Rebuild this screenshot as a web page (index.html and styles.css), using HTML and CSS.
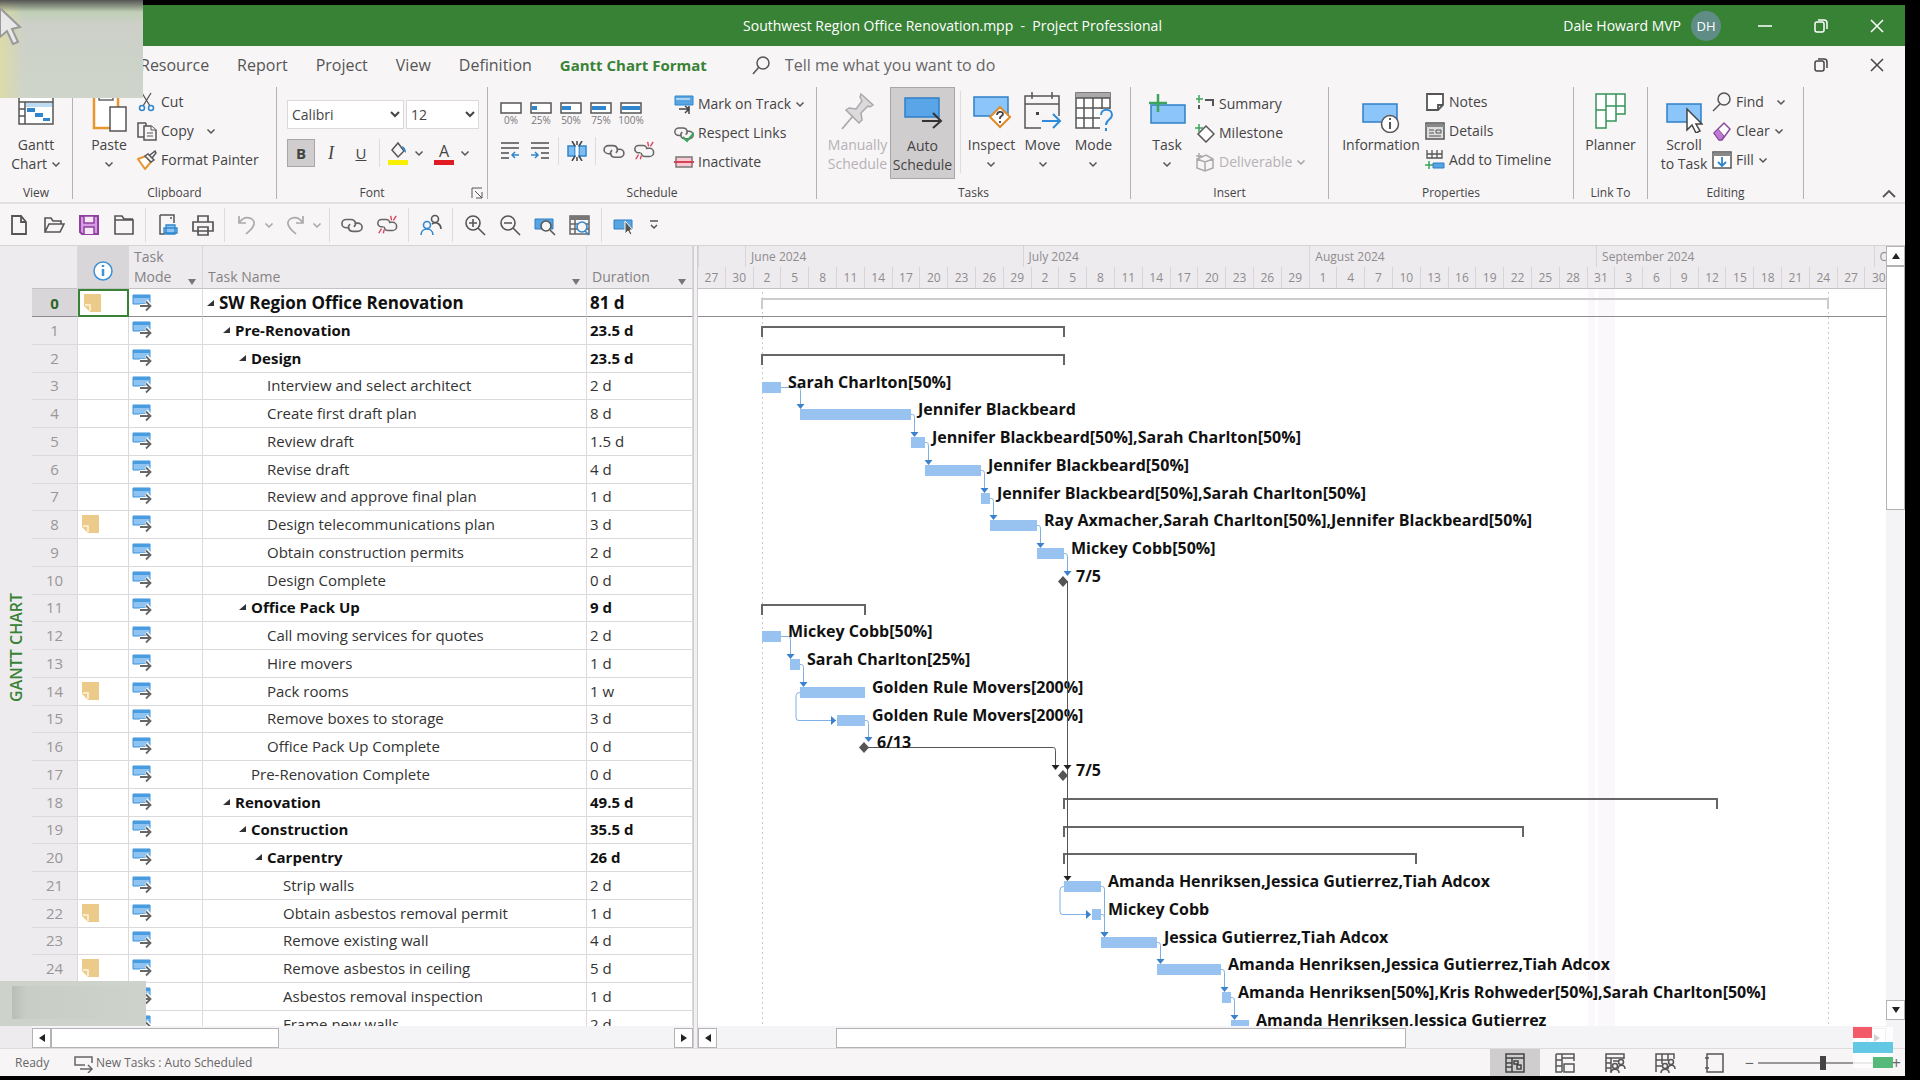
FILE: index.html
```html
<!DOCTYPE html>
<html lang="en">

<head>
    <meta charset="UTF-8">
    <link rel="stylesheet" href="styles.css">
    <title>Southwest Region Office Renovation.mpp - Project Professional</title>
</head>

<body>
    <!-- shared icons -->
    <svg class="symbols" aria-hidden="true">
        <symbol id="caret" viewBox="0 0 10 10"><path d="M1.5 3.5 5 7l3.500-3.500" fill="none" stroke="#555" stroke-width="1.500"/></symbol>
        <symbol id="restore" viewBox="0 0 16 16"><rect x="2" y="4" width="9" height="10" rx="2" fill="none" stroke="currentColor" stroke-width="1.500"/><path d="M5 2h6a3 3 0 0 1 3 3v6" fill="none" stroke="currentColor" stroke-width="1.500"/></symbol>
        <symbol id="close" viewBox="0 0 16 16"><path d="M2 2l12 12M14 2 2 14" stroke="currentColor" stroke-width="1.500"/></symbol>
        <symbol id="link" viewBox="0 0 24 20"><g fill="none" stroke="#666" stroke-width="1.800"><path d="M9 13H6a5 4.500 0 0 1 0-9h5a5 4.500 0 0 1 3 8"/><path d="M15 8h3a5 4.500 0 0 1 0 9h-5a5 4.500 0 0 1-3-8"/></g></symbol>
        <symbol id="unlink" viewBox="0 0 24 20"><g fill="none" stroke="#666" stroke-width="1.700"><path d="M8 12H6a4 4 0 0 1 0-8h5a4 4 0 0 1 4 4M14 7h4a4.500 4.500 0 0 1 0 9h-5a4 4 0 0 1-4-4"/></g><path d="M17 5l-1-5M19 5l3-5M3 19l3-5M8 19l1-4" stroke="#e0405a" stroke-width="1.500"/></symbol>
        <symbol id="mode" viewBox="0 0 20 18"><path d="M1 1h17v9H1z" fill="#8ec3f2" stroke="#3e92d8"/><path d="M1 1h17v3H1z" fill="#4a9ce0"/><path d="M8 12h11M14 7l5 5-5 5" fill="none" stroke="#fff" stroke-width="4"/><path d="M8 12h10M14 7.500l4.500 4.500-4.500 4.500" fill="none" stroke="#666" stroke-width="1.800"/></symbol>
        <symbol id="note" viewBox="0 0 20 20"><path d="M1 1h17v18H7l-6-6z" fill="#eccb8a"/><path d="M2 12h5v6" fill="none" stroke="#fff6e0" stroke-width="1.500"/></symbol>
    </svg>

    <div class="window">
        <header class="titlebar">
            <h1>Southwest Region Office Renovation.mpp&nbsp; -&nbsp; Project Professional</h1>
            <div class="account">
                <span>Dale Howard MVP</span>
                <span class="avatar">DH</span>
                <button aria-label="Minimize"><svg width="16" height="16"><path d="M1 8h14" stroke="currentColor" stroke-width="1.500"/></svg></button>
                <button aria-label="Restore"><svg width="16" height="16"><use href="#restore"/></svg></button>
                <button aria-label="Close"><svg width="16" height="16"><use href="#close"/></svg></button>
            </div>
        </header>

        <nav class="tabs">
            <a href="#">Resource</a>
            <a href="#">Report</a>
            <a href="#">Project</a>
            <a href="#">View</a>
            <a href="#">Definition</a>
            <a href="#" class="active">Gantt Chart Format</a>
            <label class="tellme">
                <svg width="20" height="20" fill="none" stroke="#555" stroke-width="1.500"><circle cx="12" cy="8" r="6"/><path d="M8 12l-6 7"/></svg>
                <input type="text" placeholder="Tell me what you want to do">
            </label>
            <div class="doc-buttons">
                <button aria-label="Restore document"><svg width="16" height="16"><use href="#restore"/></svg></button>
                <button aria-label="Close document"><svg width="16" height="16"><use href="#close"/></svg></button>
            </div>
        </nav>

        <div class="ribbon">
            <section class="group g-view">
                <div class="group-body">
                    <button class="big">
                        <svg width="36" height="36"><path d="M1 4h34v29H1z" fill="#fff" stroke="#555" stroke-width="1.500"/><path d="M1 11h34M7 11v22M1 18h6M1 25h6" stroke="#555" stroke-width="1.500"/><path d="M8 12h26v4H8z" fill="#bcdcf5"/><path d="M9 17h8v4H9zM17 22h8v4h-8zM25 27h7v3h-7z" fill="#2f86cc"/></svg>
                        <span>Gantt<br>Chart <svg class="caret"><use href="#caret"/></svg></span>
                    </button>
                </div>
                <h2>View</h2>
            </section>

            <section class="group g-clipboard">
                <div class="group-body">
                    <button class="big">
                        <svg width="36" height="42"><path d="M3 5h24v32H3z" fill="#fff" stroke="#e8962e" stroke-width="2.500"/><path d="M8 2h14v7H8z" fill="#fff" stroke="#666" stroke-width="1.500"/><path d="M19 16h16v24H19z" fill="#fff" stroke="#555" stroke-width="1.500"/></svg>
                        <span>Paste<br><svg class="caret"><use href="#caret"/></svg></span>
                    </button>
                    <div class="stack">
                        <button><svg width="20" height="20" fill="none"><path d="M5 1l8 13M14 1L6 14" stroke="#555" stroke-width="1.300"/><circle cx="5" cy="16" r="2.500" stroke="#2f86cc" stroke-width="1.500"/><circle cx="14" cy="16" r="2.500" stroke="#2f86cc" stroke-width="1.500"/></svg>Cut</button>
                        <button><svg width="20" height="20" fill="#f7f4f6" stroke="#555" stroke-width="1.500"><path d="M9 2H1v14h8M9 2v3"/><path d="M7 5h7l5 4v10H7z"/><path d="M14 5v4h5M10 12h6M10 15h6" stroke-width="1"/></svg>Copy <svg class="caret spaced"><use href="#caret"/></svg></button>
                        <button><svg width="20" height="20"><path d="M1 9l8-3 5 6-6 7z" fill="#fff" stroke="#e8962e" stroke-width="2"/><path d="M8 6l3-2 6 6-3 2zM13 5l5-4 1 2-4 5" fill="#f7f4f6" stroke="#555" stroke-width="1.400"/></svg>Format Painter</button>
                    </div>
                </div>
                <h2>Clipboard</h2>
            </section>

            <section class="group g-font">
                <div class="group-body">
                    <div class="font-tools">
                        <div class="font-row">
                            <select class="font-name" aria-label="Font"><option>Calibri</option></select>
                            <select class="font-size" aria-label="Font size"><option>12</option></select>
                        </div>
                        <div class="font-row">
                            <button class="tool pressed"><b>B</b></button>
                            <button class="tool"><i>I</i></button>
                            <button class="tool"><u>U</u></button>
                            <span class="sep"></span>
                            <button class="tool" aria-label="Background color"><svg width="22" height="24"><path d="M5 9l6-7 6 8-6 6z" fill="none" stroke="#555" stroke-width="1.500"/><path d="M15 5c3 1 4 4 4 7l-3-3z" fill="#2f86cc"/><path d="M1 19h20v5H1z" fill="#f8f000"/></svg></button>
                            <svg class="caret"><use href="#caret"/></svg>
                            <button class="tool font-color"><span>A</span></button>
                            <svg class="caret"><use href="#caret"/></svg>
                        </div>
                    </div>
                </div>
                <h2>Font</h2>
                <button class="launcher" aria-label="Font settings"><svg width="12" height="12" fill="none" stroke="#555"><path d="M1 11V1h10M4 4l7 7M11 5v6H5"/></svg></button>
            </section>

            <section class="group g-schedule">
                <div class="group-body">
                    <div class="schedule-tools">
                        <div class="percents">
                            <button><svg width="22" height="12"><path d="M1 1h20v10H1z" fill="#fff" stroke="#555" stroke-width="1.500"/></svg>0%</button>
                            <button><svg width="22" height="12"><path d="M1 1h20v10H1z" fill="#fff" stroke="#555" stroke-width="1.500"/><path d="M2 4h5v4H2z" fill="#2f86cc"/></svg>25%</button>
                            <button><svg width="22" height="12"><path d="M1 1h20v10H1z" fill="#fff" stroke="#555" stroke-width="1.500"/><path d="M2 4h9v4H2z" fill="#2f86cc"/></svg>50%</button>
                            <button><svg width="22" height="12"><path d="M1 1h20v10H1z" fill="#fff" stroke="#555" stroke-width="1.500"/><path d="M2 4h14v4H2z" fill="#2f86cc"/></svg>75%</button>
                            <button><svg width="22" height="12"><path d="M1 1h20v10H1z" fill="#fff" stroke="#555" stroke-width="1.500"/><path d="M2 4h18v4H2z" fill="#2f86cc"/></svg>100%</button>
                        </div>
                        <div class="link-tools">
                            <button class="tool" aria-label="Outdent"><svg width="20" height="20"><path d="M1 2h18M1 7h18M1 12h8M1 17h8" stroke="#777" stroke-width="1.800"/><path d="M19 14h-7M15 11l-3 3 3 3" fill="none" stroke="#2f86cc" stroke-width="1.500"/></svg></button>
                            <button class="tool" aria-label="Indent"><svg width="20" height="20"><path d="M1 2h18M1 7h18M11 12h8M11 17h8" stroke="#777" stroke-width="1.800"/><path d="M1 14h7M5 11l3 3-3 3" fill="none" stroke="#2f86cc" stroke-width="1.500"/></svg></button>
                            <span class="sep"></span>
                            <button class="tool" aria-label="Split task"><svg width="20" height="20"><path d="M1 5h7v10H1zM12 5h7v10h-7z" fill="#7fbcf2" stroke="#2f86cc" stroke-width="1.500"/><path d="M10 6v8" stroke="#fff" stroke-width="3"/><path d="M10 0v4M10 16v4M5 0l3 5M15 0l-3 5M5 20l3-5M15 20l-3-5" stroke="#444" stroke-width="1.500"/></svg></button>
                            <span class="sep"></span>
                            <button class="tool" aria-label="Link"><svg width="22" height="18"><use href="#link"/></svg></button>
                            <button class="tool" aria-label="Unlink"><svg width="22" height="20"><use href="#unlink"/></svg></button>
                        </div>
                    </div>
                    <div class="stack">
                        <button><svg width="20" height="20"><path d="M1 2h18v9H1z" fill="#59a5e2" stroke="#2f86cc"/><path d="M2 5h14" stroke="#fff"/><path d="M5 15h9M11 12l4 3-4 4M15 12v8" fill="none" stroke="#444" stroke-width="1.500"/></svg>Mark on Track <svg class="caret"><use href="#caret"/></svg></button>
                        <button><svg width="20" height="20"><use href="#link"/><path d="M9 14l4 4 7-8" fill="none" stroke="#3ba55d" stroke-width="2"/></svg>Respect Links</button>
                        <button><svg width="20" height="20"><path d="M2 5h16v10H2z" fill="#f8c9d0" stroke="#777" stroke-width="1.500"/><path d="M0 10h20" stroke="#d64058" stroke-width="2"/></svg>Inactivate</button>
                    </div>
                </div>
                <h2>Schedule</h2>
            </section>

            <section class="group g-tasks">
                <div class="group-body">
                    <button class="big wide" disabled>
                        <svg width="36" height="40"><path d="M21 3l12 11-3 2-2-1-7 7 1 7-3 3L6 19l3-2 7 1 6-8-2-4z" fill="#dcdadc" stroke="#aaa" stroke-width="1.500"/><path d="M13 25L2 38" stroke="#aaa" stroke-width="1.800"/></svg>
                        <span>Manually<br>Schedule</span>
                    </button>
                    <button class="big wide pressed">
                        <svg width="40" height="36"><path d="M2 6h34v19H2z" fill="#5aa5e8" stroke="#2f7fc8" stroke-width="1.500"/><path d="M19 29h18M30 21l8 8-8 7" fill="none" stroke="#333" stroke-width="2"/></svg>
                        <span>Auto<br>Schedule</span>
                    </button>
                    <span class="sep"></span>
                    <button class="big mid">
                        <svg width="38" height="38"><path d="M1 6h34v19H1z" fill="#8cc5fa" stroke="#2f7fc8" stroke-width="1.500"/><path d="M27 16l10 10-10 10-10-10z" fill="#fff" stroke="#e08a2a" stroke-width="2"/><path d="M24 24c0-4 6-4 6-1 0 2-3 2-3 4v1M27 30v2" fill="none" stroke="#444" stroke-width="1.800"/></svg>
                        <span>Inspect<br><svg class="caret"><use href="#caret"/></svg></span>
                    </button>
                    <button class="big mid">
                        <svg width="38" height="40"><path d="M1 5h34v32H1zM1 13h34M8 1v7M28 1v7" fill="none" stroke="#555" stroke-width="1.500"/><path d="M12 21h3v3h-3z" fill="#444"/><path d="M17 25h21v13H17z" fill="#f7f4f6"/><path d="M18 30h18M29 23l7 7-7 7" fill="none" stroke="#2f8ad8" stroke-width="2"/></svg>
                        <span>Move<br><svg class="caret"><use href="#caret"/></svg></span>
                    </button>
                    <button class="big mid">
                        <svg width="38" height="40"><path d="M1 2h34v35H1z" fill="#fff" stroke="#555" stroke-width="1.500"/><path d="M1 2h34v5H1z" fill="#aaa"/><path d="M1 7h34M1 17h34M1 27h34M9 7v30M18 7v30M27 7v30" stroke="#555" stroke-width="1.500"/><path d="M25 18h13v22H25z" fill="#f7f4f6"/><path d="M26 24c0-7 11-7 11 0 0 5-6 4-6 10M31 37v3" fill="none" stroke="#2f8ad8" stroke-width="2"/></svg>
                        <span>Mode<br><svg class="caret"><use href="#caret"/></svg></span>
                    </button>
                </div>
                <h2>Tasks</h2>
            </section>

            <section class="group g-insert">
                <div class="group-body">
                    <button class="big">
                        <svg width="38" height="42"><path d="M3 14h34v18H3z" fill="#8cc5fa" stroke="#2f7fc8" stroke-width="1.500"/><path d="M1 12h18M10 3v18" stroke="#3ba55d" stroke-width="2.500"/></svg>
                        <span>Task<br><svg class="caret"><use href="#caret"/></svg></span>
                    </button>
                    <div class="stack">
                        <button><svg width="20" height="20"><path d="M1 5h7M4 1v8" stroke="#3ba55d" stroke-width="1.500"/><path d="M4 15v-4M10 6h8v6" fill="none" stroke="#555" stroke-width="2"/></svg>Summary</button>
                        <button><svg width="20" height="20"><path d="M11 3l8 8-8 8-8-8z" fill="#fff" stroke="#555" stroke-width="1.500"/><path d="M0 5h8M4 1v8" stroke="#3ba55d" stroke-width="1.500"/></svg>Milestone</button>
                        <button disabled><svg width="20" height="20" fill="none" stroke="#aaa" stroke-width="1.500"><path d="M2 7l9-4 7 4v9l-8 3-8-3zM2 7l8 3 8-3M10 10v9M4 1v6M1 4h6"/></svg>Deliverable <svg class="caret pale"><use href="#caret"/></svg></button>
                    </div>
                </div>
                <h2>Insert</h2>
            </section>

            <section class="group g-properties">
                <div class="group-body">
                    <button class="big info">
                        <svg width="38" height="42"><path d="M1 13h34v18H1z" fill="#8cc5fa" stroke="#2f7fc8" stroke-width="1.500"/><circle cx="28" cy="33" r="8.500" fill="#fff" stroke="#555" stroke-width="1.500"/><path d="M28 31v7M28 27v2" stroke="#444" stroke-width="1.800"/></svg>
                        <span>Information</span>
                    </button>
                    <div class="stack">
                        <button><svg width="20" height="20"><path d="M2 2h16v11l-5 5H2zM18 13h-5v5" fill="#fff" stroke="#555" stroke-width="1.800"/></svg>Notes</button>
                        <button><svg width="20" height="20"><path d="M1 2h18v16H1z" fill="#ddd" stroke="#555" stroke-width="1.500"/><path d="M1 3h18v3H1z" fill="#888"/><path d="M4 9h5M4 12h5M4 15h12M11 9h5v3h-5z" fill="none" stroke="#555"/></svg>Details</button>
                        <button><svg width="20" height="20"><path d="M2 0v8h15V0M2 4h15M7 0v8M12 0v8" fill="none" stroke="#555" stroke-width="1.300"/><path d="M8 13h11v5H8z" fill="#59a5e2" stroke="#2f7fc8"/><path d="M0 15h8M4 11v8" stroke="#3ba55d" stroke-width="1.500"/></svg>Add to Timeline</button>
                    </div>
                </div>
                <h2>Properties</h2>
            </section>

            <section class="group g-planner">
                <div class="group-body">
                    <button class="big">
                        <svg width="32" height="40" fill="#fff" stroke="#35935a" stroke-width="1.500"><path d="M1 3h10v16H1zM11 3h10v12H11zM21 3h9v20h-9zM1 19h10v18H1zM11 15h10v15H11zM21 15h9"/></svg>
                        <span>Planner</span>
                    </button>
                </div>
                <h2>Link To</h2>
            </section>

            <section class="group g-editing">
                <div class="group-body">
                    <button class="big">
                        <svg width="38" height="42"><path d="M2 13h34v18H2z" fill="#8cc5fa" stroke="#2f7fc8" stroke-width="1.500"/><path d="M22 18v21l5-5 4 8 4-2-4-7h6z" fill="#fff" stroke="#444" stroke-width="1.500"/></svg>
                        <span>Scroll<br>to Task</span>
                    </button>
                    <div class="stack">
                        <button><svg width="20" height="20" fill="none" stroke="#555" stroke-width="1.500"><circle cx="12" cy="7" r="6"/><path d="M8 12l-7 7"/></svg>Find <svg class="caret spaced"><use href="#caret"/></svg></button>
                        <button><svg width="20" height="20"><path d="M2 12l10-10 6 6-8 11H7z" fill="#fff" stroke="#8a4a9e" stroke-width="1.500"/><path d="M2 12l4-4 6 7-3 4H7z" fill="#c079d2" stroke="#8a4a9e"/></svg>Clear <svg class="caret"><use href="#caret"/></svg></button>
                        <button><svg width="20" height="20"><path d="M1 2h18v16H1z" fill="#fff" stroke="#555" stroke-width="1.500"/><path d="M1 3h18v3H1z" fill="#888"/><path d="M10 7v8M6 12l4 4 4-4" fill="none" stroke="#2f86cc" stroke-width="1.800"/></svg>Fill <svg class="caret"><use href="#caret"/></svg></button>
                    </div>
                </div>
                <h2>Editing</h2>
            </section>

            <button class="collapse" aria-label="Collapse ribbon"><svg width="14" height="10"><path d="M1 8l6-6 6 6" fill="none" stroke="#555" stroke-width="1.800"/></svg></button>
        </div>

        <div class="quick">
            <button aria-label="New"><svg width="20" height="22" fill="none" stroke="#555" stroke-width="1.800"><path d="M3 2h9l5 6v12H3zM12 2v6h5"/></svg></button>
            <button aria-label="Open"><svg width="22" height="20" fill="none" stroke="#555" stroke-width="1.600"><path d="M2 17V3h6l2 3h8v3M2 17l4-8h15l-4 8z"/></svg></button>
            <button aria-label="Save"><svg width="22" height="22"><path d="M2 2h18v18H4l-2-2z" fill="#d79be6" stroke="#90409f" stroke-width="2"/><path d="M6 2h10v7H6zM6 20v-7h10v7" fill="#f7e8fa" stroke="#90409f" stroke-width="1.500"/></svg></button>
            <button aria-label="Close file"><svg width="22" height="22" fill="none" stroke="#555" stroke-width="1.600"><path d="M2 6h18v14H2zM2 6V2h7l2 3h9"/></svg></button>
            <span class="sep"></span>
            <button aria-label="Print preview"><svg width="22" height="24"><path d="M3 2h14v8M3 2v19h5M13 5h2" fill="none" stroke="#555" stroke-width="1.500"/><path d="M9 12h9v9H9zM7 15h13v5H7z" fill="#8ec3f2" stroke="#2f86cc" stroke-width="1.300"/></svg></button>
            <button aria-label="Print"><svg width="22" height="22" fill="#f7f4f6" stroke="#555" stroke-width="1.700"><path d="M6 8V2h10v6M1 8h20v9H1zM6 13h10v8H6z"/></svg></button>
            <span class="sep"></span>
            <button aria-label="Undo"><svg width="22" height="22" fill="none" stroke="#aaa" stroke-width="1.700"><path d="M3 2v7h7M3 9c6-9 16-5 15 1-1 5-5 7-8 10"/></svg></button>
            <svg class="caret pale"><use href="#caret"/></svg>
            <button aria-label="Redo"><svg width="22" height="22" fill="none" stroke="#aaa" stroke-width="1.700"><path d="M19 2v7h-7M19 9C13 0 3 4 4 10c1 5 5 7 8 10"/></svg></button>
            <svg class="caret pale"><use href="#caret"/></svg>
            <span class="sep"></span>
            <button aria-label="Link tasks"><svg width="22" height="20"><use href="#link"/></svg></button>
            <button aria-label="Unlink tasks"><svg width="22" height="22"><use href="#unlink"/></svg></button>
            <span class="sep"></span>
            <button aria-label="Assign resources"><svg width="22" height="22" fill="none" stroke-width="1.600"><g stroke="#2f86cc"><circle cx="7" cy="11" r="3.500"/><path d="M1 21c0-8 12-8 12 0"/></g><g stroke="#555"><circle cx="15" cy="5" r="3.500"/><path d="M12 10c4-3 9 0 9 5"/></g></svg></button>
            <span class="sep"></span>
            <button aria-label="Zoom in"><svg width="22" height="22" fill="none" stroke="#555" stroke-width="1.600"><circle cx="9" cy="9" r="7"/><path d="M14 14l7 7M5 9h8M9 5v8"/></svg></button>
            <button aria-label="Zoom out"><svg width="22" height="22" fill="none" stroke="#555" stroke-width="1.600"><circle cx="9" cy="9" r="7"/><path d="M14 14l7 7M5 9h8"/></svg></button>
            <button aria-label="Zoom to task"><svg width="22" height="22"><path d="M1 5h18v10H1z" fill="#59a5e2" stroke="#2f7fc8"/><circle cx="12" cy="12" r="5" fill="#f7f4f6" stroke="#555" stroke-width="1.600"/><path d="M16 16l5 5" stroke="#555" stroke-width="1.600"/></svg></button>
            <button aria-label="Zoom table"><svg width="22" height="22"><path d="M1 2h19v18H1zM1 10h19M1 15h19M6 5v15" fill="none" stroke="#666" stroke-width="1.500"/><path d="M1 2h19v4H1z" fill="#777"/><circle cx="13" cy="13" r="5" fill="#f7f4f6" stroke="#2f86cc" stroke-width="1.600"/><path d="M16 17l4 4" stroke="#2f86cc" stroke-width="1.600"/></svg></button>
            <span class="sep"></span>
            <button aria-label="Scroll to task"><svg width="22" height="22"><path d="M1 6h18v9H1z" fill="#59a5e2" stroke="#2f7fc8"/><path d="M12 7v13l3-3 2 4 2-1-2-4h3z" fill="#555" stroke="#fff"/></svg></button>
            <button aria-label="Customize toolbar" class="more"><svg width="12" height="12"><path d="M2 2h8M3 6l3 3 3-3" fill="none" stroke="#555" stroke-width="1.500"/></svg></button>
        </div>

        <main class="workspace">
            <div class="view-name"><span>GANTT CHART</span></div>

            <div class="sheet">
                <div class="sheet-rows">
                    <table>
                        <thead>
                            <tr>
                                <th class="c-id"></th>
                                <th class="c-info"><svg width="22" height="22"><circle cx="11" cy="11" r="9" fill="#fff" stroke="#3e92d8" stroke-width="1.500"/><path d="M11 9v7M11 5v2" stroke="#3e92d8" stroke-width="2.500"/></svg></th>
                                <th class="c-mode"><div><span>Task<br>Mode</span><i class="arrow-down"></i></div></th>
                                <th class="c-name"><div><span>Task Name</span><i class="arrow-down"></i></div></th>
                                <th class="c-duration"><div><span>Duration</span><i class="arrow-down"></i></div></th>
                            </tr>
                        </thead>
                        <tbody id="tasks"></tbody>
                    </table>
                </div>
                <div class="hscroll">
                    <button aria-label="Scroll left"><i class="arrow-left"></i></button>
                    <span class="thumb sheet-thumb"></span>
                    <button class="end" aria-label="Scroll right"><i class="arrow-right"></i></button>
                </div>
            </div>

            <div class="splitter"></div>

            <div class="gantt">
                <div class="timescale">
                    <div class="months" id="months"></div>
                    <div class="days" id="days"></div>
                </div>
                <div class="chart"><svg id="chart" width="100%" height="100%"></svg></div>
                <div class="hscroll">
                    <button aria-label="Scroll left"><i class="arrow-left"></i></button>
                    <span class="thumb gantt-thumb"></span>
                    <button class="end" aria-label="Scroll right"><i class="arrow-right"></i></button>
                </div>
            </div>

            <div class="vscroll">
                <button aria-label="Scroll up"><i class="arrow-up"></i></button>
                <span class="thumb"></span>
                <button class="end" aria-label="Scroll down"><i class="arrow-down dark"></i></button>
            </div>
        </main>

        <footer class="status">
            <span class="ready">Ready</span>
            <span class="new-tasks"><svg width="20" height="20" fill="none" stroke="#666" stroke-width="1.500"><path d="M11 12H1V4h17v6M6 16h12M14 12l4 4-4 4"/></svg>New Tasks : Auto Scheduled</span>
            <div class="views">
                <button class="pressed" aria-label="Gantt chart"><svg width="22" height="22" fill="none" stroke="#444" stroke-width="1.500"><path d="M2 2h18v18H2zM2 6h18M8 6v14M2 11h6M2 15h6M10 9h4v3h-4zM13 13h4v4h-4z"/></svg></button>
                <button aria-label="Task usage"><svg width="22" height="22" fill="none" stroke="#555" stroke-width="1.500"><path d="M8 10V2h12v7M2 2h6M2 2v18h6M2 8h6M2 14h6M8 10v10M10 12h10v8H10zM8 6h12"/></svg></button>
                <button aria-label="Team planner"><svg width="22" height="22" fill="none" stroke="#555" stroke-width="1.500"><path d="M2 20V2h18v5M2 6h18M7 6v14M2 11h5M2 16h5M9 9h5"/><circle cx="17" cy="10" r="2.500"/><path d="M14 17c0-5 7-5 7 0"/><circle cx="11" cy="14" r="2.500"/><path d="M7 21c0-5 8-5 8 0"/></svg></button>
                <button aria-label="Resource sheet"><svg width="22" height="22" fill="none" stroke="#555" stroke-width="1.500"><path d="M2 20V2h18v5M2 8h12M8 2v10M14 2v6M2 14h6"/><circle cx="17" cy="10" r="2.500"/><path d="M14 17c0-5 7-5 7 0"/><circle cx="11" cy="14" r="2.500"/><path d="M7 21c0-5 8-5 8 0"/></svg></button>
                <button aria-label="Report"><svg width="22" height="22" fill="none" stroke="#555" stroke-width="1.500"><path d="M3 2h16v18H3zM1 6h4M1 16h4"/></svg></button>
            </div>
            <div class="zoom">
                <span>−</span>
                <input type="range" min="0" max="100" value="50" aria-label="Zoom">
                <span>+</span>
            </div>
        </footer>
    </div>

    <!-- blurred patches and corner mark lying over the window -->
    <div class="patch patch-top">
        <svg width="24" height="48"><path d="M0 8l20 19-8 2 6 13-5 2-6-13-7 6z" fill="#e8e8e8" stroke="#999" stroke-width="2"/></svg>
    </div>
    <div class="patch patch-bottom"></div>
    <div class="corner-mark"><i class="red"></i><i class="cyan"></i><i class="green"></i></div>

    <script src="script.js"></script>
</body>

</html>
```

FILE: styles.css
```css
/* ========BASIC======== */
* {
    box-sizing: border-box;
}

body {
    position: relative;
    height: 100vh;
    margin: 0;
    padding: 5px 15px 4px 0;
    overflow: hidden;
    background: #000;
    color: #444;
    font-family: "Open Sans", "Noto Sans", sans-serif;
    font-size: 14px;
}

h1,
h2 {
    margin: 0;
    font-weight: normal;
}

button {
    padding: 0;
    border: 0;
    background: none;
    color: inherit;
    font: inherit;
}

svg {
    display: block;
    flex-shrink: 0;
}

.symbols {
    position: absolute;
    width: 0;
    height: 0;
}

.window {
    display: flex;
    flex-direction: column;
    height: 100%;
    background: #f8f5f7;
}

.sep {
    width: 1px;
    height: 28px;
    background: #dedbde;
}

.caret {
    display: inline-block;
    width: 10px;
    height: 10px;
}

/* ========TITLE BAR======== */
.titlebar {
    display: grid;
    grid-template-columns: 1fr auto 1fr;
    align-items: center;
    height: 41px;
    background: #388235;
    color: #fff;
}

.titlebar h1 {
    grid-column: 2;
    font-size: 14px;
}

.account {
    display: flex;
    justify-content: flex-end;
    align-items: center;
}

.avatar {
    width: 30px;
    height: 30px;
    margin: 0 16px 0 10px;
    border-radius: 50%;
    background: #5f8d86;
    font-size: 13px;
    line-height: 30px;
    text-align: center;
}

.account button,
.doc-buttons button {
    display: grid;
    place-items: center;
    width: 56px;
    height: 32px;
}

/* ========TABS======== */
.tabs {
    display: flex;
    align-items: center;
    gap: 28px;
    height: 41px;
    padding: 0 0 4px 140px;
    font-size: 16px;
}

.tabs a {
    color: #555;
    text-decoration: none;
}

.tabs .active {
    color: #388235;
    font-size: 15px;
    font-weight: bold;
}

.tellme {
    display: flex;
    align-items: center;
    gap: 14px;
    flex: 1;
    padding-left: 16px;
}

.tellme input {
    width: 260px;
    padding: 0;
    border: 0;
    background: none;
    font: inherit;
}

.tellme input::placeholder {
    color: #666;
}

.doc-buttons {
    display: flex;
}

/* ========RIBBON======== */
.ribbon {
    display: flex;
    height: 117px;
    border-bottom: 2px solid #e3e0e2;
}

.group {
    position: relative;
    display: flex;
    flex-direction: column;
    height: 112px;
    border-right: 1px solid #b5b2b4;
}

.group-body {
    display: flex;
    flex: 1;
    padding-left: 8px;
}

.group h2 {
    height: 12px;
    font-size: 12px;
    line-height: 12px;
    text-align: center;
}

.g-view {
    width: 73px;
}

.g-clipboard {
    width: 204px;
}

.g-font {
    width: 211px;
}

.g-font h2 {
    padding-right: 20px;
}

.g-schedule {
    width: 329px;
}

.g-tasks {
    width: 314px;
}

.g-insert {
    width: 198px;
}

.g-properties {
    width: 245px;
}

.g-planner {
    width: 74px;
}

.g-editing {
    width: 156px;
}

.g-view .group-body,
.g-planner .group-body {
    padding: 0;
}

.g-view .big,
.g-planner .big {
    width: 100%;
}

.big {
    display: flex;
    flex-direction: column;
    align-items: center;
    width: 56px;
    height: 92px;
    line-height: 19px;
    white-space: nowrap;
}

.big > svg {
    height: 42px;
    margin-top: 4px;
}

.big > span {
    margin-top: 2px;
}

.big.wide {
    width: 65px;
}

.big.mid {
    width: 51px;
}

.big.info {
    width: 88px;
}

.big + .sep {
    height: 82px;
    margin: 4px 5px 0;
}

button:disabled {
    color: #b5b2b4;
}

.pressed {
    border: 1px solid #a9a6a8;
    background: #d0cdcf;
}

.stack {
    display: flex;
    flex-direction: column;
}

.stack button {
    display: flex;
    align-items: center;
    gap: 4px;
    height: 29px;
    white-space: nowrap;
}

.caret.spaced {
    margin-left: 8px;
}

.g-schedule .stack {
    margin-left: 16px;
}

.g-schedule .stack,
.g-insert .stack {
    padding-top: 2px;
}

.font-tools {
    display: flex;
    flex-direction: column;
    gap: 10px;
    padding: 13px 0 0 2px;
}

.font-row {
    display: flex;
    align-items: center;
    gap: 2px;
}

.font-row select {
    height: 29px;
    padding: 0;
    border: 1px solid #dcd9db;
    background: #fff;
    color: #444;
    font: inherit;
}

.font-name {
    width: 117px;
}

.font-size {
    width: 73px;
}

.tool {
    display: grid;
    place-items: center;
    width: 28px;
    height: 28px;
    font-size: 15px;
}

.tool i {
    font-family: "Liberation Serif", serif;
    font-size: 18px;
}

.font-row .sep {
    margin: 0 2px;
}

.font-row .caret {
    margin-right: 4px;
}

.font-color span {
    width: 20px;
    border-bottom: 5px solid #e01b24;
    font-size: 16px;
    line-height: 18px;
}

.launcher {
    position: absolute;
    right: 4px;
    bottom: 0;
}

.percents {
    display: flex;
    height: 50px;
    padding-top: 15px;
}

.percents button {
    display: flex;
    flex-direction: column;
    align-items: center;
    width: 30px;
    color: #777;
    font-size: 10px;
    line-height: 12px;
}

.link-tools {
    display: flex;
    align-items: center;
    gap: 2px;
}

.link-tools .sep {
    margin: 0 2px;
}

.collapse {
    margin: auto 9px 3px auto;
}

/* ========QUICK ACCESS======== */
.quick {
    display: flex;
    align-items: center;
    height: 42px;
    padding-left: 1px;
    border-bottom: 1px solid #d6d3d5;
}

.quick button {
    display: grid;
    place-items: center;
    width: 35px;
    height: 32px;
}

.quick .sep {
    height: 34px;
    margin: 0 4px;
}

.quick .caret {
    margin-right: 3px;
}

.quick .more {
    width: 26px;
}

.pale {
    opacity: .5;
}

/* ========TASK SHEET======== */
.workspace {
    display: flex;
    flex: 1;
    min-height: 0;
    background: #edebed;
}

.view-name {
    display: grid;
    place-items: center;
    width: 32px;
}

.view-name span {
    color: #388235;
    font-size: 16px;
    font-weight: 600;
    writing-mode: vertical-rl;
    rotate: 180deg;
}

.sheet {
    display: flex;
    flex-direction: column;
    width: 661px;
}

.sheet-rows {
    flex: 1;
    overflow: hidden;
}

.sheet table {
    width: 100%;
    border-spacing: 0;
    table-layout: fixed;
    font-size: 15px;
}

.sheet th {
    height: 43px;
    padding: 0 6px 1px 5px;
    border-right: 1px solid #dad7da;
    border-bottom: 1px solid #c4c1c4;
    color: #858285;
    font-size: 14px;
    font-weight: normal;
    line-height: 20px;
    text-align: left;
    vertical-align: bottom;
}

.sheet th div {
    display: flex;
    justify-content: space-between;
    align-items: flex-end;
}

.c-id {
    width: 46px;
}

.c-info {
    width: 51px;
    background: #d9d6d9;
}

.c-mode {
    width: 74px;
}

.c-duration {
    width: 106px;
}

.sheet .c-info {
    padding: 0 0 6px 14px;
}

.sheet td {
    height: 28px;
    padding: 0 0 2px 3px;
    border-right: 1px solid #dcd9dc;
    border-bottom: 1px solid #dcd9dc;
    background: #fff;
    color: #333;
    line-height: 22px;
    white-space: nowrap;
}

.sheet tr:nth-child(4n) td {
    height: 27px;
}

.sheet td:first-child {
    padding: 0 0 2px;
    background: #edebed;
    color: #999699;
    text-align: center;
}

.sheet .project td {
    padding-bottom: 0;
    border-bottom-color: #8f8c8f;
    font-size: 17px;
}

.sheet .project td:first-child {
    background: #d9d6d9;
    color: #2c6629;
    font-size: 15px;
    font-weight: bold;
}

.sheet .project td:nth-child(2) {
    border: 2px solid #388235;
}

.summary td:nth-child(n+4) {
    color: #111;
    font-weight: bold;
}

.task {
    display: flex;
    align-items: center;
    gap: 5px;
}

/* outline depth of a task */
.level-0 {
    padding-left: 1px;
}

.level-1 {
    padding-left: 17px;
}

.level-2 {
    padding-left: 33px;
}

.level-3 {
    padding-left: 49px;
}

.level-4 {
    padding-left: 65px;
}

.twisty {
    width: 7px;
    height: 6px;
}

.arrow-down,
.arrow-up,
.arrow-left,
.arrow-right {
    display: block;
    border: 4px solid transparent;
}

.arrow-down {
    margin-bottom: 2px;
    border-top: 6px solid #777;
    border-bottom: 0;
}

.arrow-down.dark {
    margin: 0;
    border-top-color: #222;
}

.arrow-up {
    border-top: 0;
    border-bottom: 6px solid #222;
}

.arrow-left {
    border-left: 0;
    border-right: 6px solid #222;
}

.arrow-right {
    border-right: 0;
    border-left: 6px solid #222;
}

.splitter {
    width: 5px;
    border: 1px solid #cfccd0;
    border-width: 0 1px;
    background: #f2f0f3;
}

/* ========SCROLLBARS======== */
.hscroll {
    display: flex;
    align-items: flex-end;
    height: 22px;
    background: #f4f3f6;
}

.hscroll button,
.vscroll button {
    display: grid;
    place-items: center;
    width: 19px;
    height: 20px;
    border: 1px solid #b5b2b5;
    background: #fff;
}

.hscroll .end {
    margin-left: auto;
}

.thumb {
    border: 1px solid #b5b2b5;
    background: #fff;
}

.hscroll .thumb {
    height: 20px;
}

.sheet-thumb {
    width: 228px;
}

.gantt-thumb {
    width: 48%;
    margin-left: 10%;
}

.vscroll {
    display: flex;
    flex-direction: column;
    width: 19px;
    padding-bottom: 28px;
    background: #f4f3f6;
}

.vscroll .thumb {
    height: 244px;
}

.vscroll .end {
    margin-top: auto;
}

/* ========GANTT======== */
.gantt {
    display: flex;
    flex: 1;
    flex-direction: column;
    min-width: 0;
    overflow: hidden;
}

.timescale {
    width: 1195px;
    height: 43px;
    border-bottom: 1px solid #c4c1c4;
    color: #8f8c8f;
    font-size: 12px;
    white-space: nowrap;
}

.months,
.days {
    display: flex;
    height: 21px;
    line-height: 21px;
}

.months span {
    width: 0;
    border-left: 1px solid #d8d5d8;
    text-indent: 5px;
}

.days span {
    flex: 1;
    border-right: 1px solid #d8d5d8;
    text-align: center;
}

.chart {
    flex: 1;
    min-height: 0;
    background: #fff;
}

.bar {
    fill: #98c3f0;
}

.bracket {
    fill: none;
    stroke: #666;
    stroke-width: 2;
}

.bracket.top {
    stroke: #ccc;
}

.milestone {
    fill: #555;
}

.label {
    fill: #111;
    font-size: 16px;
    font-weight: bold;
}

.wire {
    fill: none;
    stroke: #7fb0e2;
}

.wire.dark {
    stroke: #555;
}

.head {
    fill: #3b82cc;
}

.head.dark {
    fill: #222;
}

.limit {
    stroke: #ccc;
    stroke-dasharray: 2 3;
}

.weekend {
    fill: #faf8fb;
}

.rule {
    stroke: #8f8c8f;
}

/* ========STATUS BAR======== */
.status {
    display: flex;
    align-items: center;
    height: 28px;
    border-top: 1px solid #dedbde;
    color: #666;
    font-size: 12px;
}

.ready {
    width: 59px;
    margin-left: 15px;
}

.new-tasks {
    display: flex;
    align-items: center;
    gap: 2px;
}

.views {
    display: flex;
    margin-left: auto;
}

.views button {
    display: grid;
    place-items: center;
    width: 50px;
    height: 27px;
}

.views .pressed {
    border: 0;
}

.zoom {
    display: flex;
    align-items: center;
    gap: 4px;
    margin: 0 4px 0 5px;
    font-size: 16px;
}

.zoom input {
    width: 130px;
    height: 16px;
    margin: 0;
    appearance: none;
    background: linear-gradient(#999, #999) center / 100% 2px no-repeat;
}

.zoom input::-webkit-slider-thumb {
    width: 6px;
    height: 14px;
    appearance: none;
    background: #444;
}

/* ========OVERLAYS======== */
.patch {
    position: absolute;
    left: 0;
}

.patch-top {
    top: 0;
    width: 143px;
    height: 98px;
    background: linear-gradient(#555, transparent 12px), linear-gradient(90deg, #dcdba8, transparent 24px), linear-gradient(#b3cda5, #ccd0c8 24px, #cfd5ca);
}

.patch-bottom {
    bottom: 54px;
    width: 146px;
    height: 45px;
    border: 6px solid #cdd2ca;
    border-width: 5px 0 7px 12px;
    background: linear-gradient(90deg, #b9bdb5, #c9cec5 14px, #cdd3ca);
}

.corner-mark {
    position: absolute;
    right: 27px;
    bottom: 12px;
    display: grid;
    gap: 4px;
    width: 40px;
    background: #fffc;
}

.corner-mark i {
    height: 11px;
}

.red {
    width: 19px;
    background: #f45b69;
}

.cyan {
    background: #62c8e6;
}

.green {
    width: 20px;
    margin-left: auto;
    background: #55b97a;
}
```

FILE: script.js
```js
// id, outline level, name, duration, summary, note
var tasks = [
    [0, 0, "SW Region Office Renovation", "81 d", 1, 1],
    [1, 1, "Pre-Renovation", "23.5 d", 1, 0],
    [2, 2, "Design", "23.5 d", 1, 0],
    [3, 3, "Interview and select architect", "2 d", 0, 0],
    [4, 3, "Create first draft plan", "8 d", 0, 0],
    [5, 3, "Review draft", "1.5 d", 0, 0],
    [6, 3, "Revise draft", "4 d", 0, 0],
    [7, 3, "Review and approve final plan", "1 d", 0, 0],
    [8, 3, "Design telecommunications plan", "3 d", 0, 1],
    [9, 3, "Obtain construction permits", "2 d", 0, 0],
    [10, 3, "Design Complete", "0 d", 0, 0],
    [11, 2, "Office Pack Up", "9 d", 1, 0],
    [12, 3, "Call moving services for quotes", "2 d", 0, 0],
    [13, 3, "Hire movers", "1 d", 0, 0],
    [14, 3, "Pack rooms", "1 w", 0, 1],
    [15, 3, "Remove boxes to storage", "3 d", 0, 0],
    [16, 3, "Office Pack Up Complete", "0 d", 0, 0],
    [17, 2, "Pre-Renovation Complete", "0 d", 0, 0],
    [18, 1, "Renovation", "49.5 d", 1, 0],
    [19, 2, "Construction", "35.5 d", 1, 0],
    [20, 3, "Carpentry", "26 d", 1, 0],
    [21, 4, "Strip walls", "2 d", 0, 0],
    [22, 4, "Obtain asbestos removal permit", "1 d", 0, 1],
    [23, 4, "Remove existing wall", "4 d", 0, 0],
    [24, 4, "Remove asbestos in ceiling", "5 d", 0, 1],
    [25, 4, "Asbestos removal inspection", "1 d", 0, 0],
    [26, 4, "Frame new walls", "2 d", 0, 0]
];

document.getElementById("tasks").innerHTML = tasks.map(function (t) {
    var cls = (t[4] ? "summary" : "") + (t[0] == 0 ? " project" : "");
    // tasks without a twisty keep the text in line with their siblings
    var twisty = t[4] ? '<svg class="twisty"><path d="M7 0v6H0z" fill="#333"/></svg>' : '<span class="twisty"></span>';
    return '<tr class="' + cls + '"><td>' + t[0] + '</td>' +
        '<td>' + (t[5] ? '<svg width="20" height="20"><use href="#note"/></svg>' : "") + '</td>' +
        '<td><svg width="20" height="18"><use href="#mode"/></svg></td>' +
        '<td><div class="task level-' + t[1] + '">' + twisty + t[2] + '</div></td>' +
        '<td>' + t[3] + '</td></tr>';
}).join("");

// timescale: months by number of days, then one cell for every third day
document.getElementById("months").innerHTML = [["", 5], ["June 2024", 30], ["July 2024", 31], ["August 2024", 31], ["September 2024", 30], ["October 2024", 2]].map(function (m) {
    return '<span style="flex-grow:' + m[1] + '">' + m[0] + '</span>';
}).join("");

var days = "";
for (var i = 0; i < 43; i++) {
    days += "<span>" + new Date(2024, 4, 27 + i * 3).getDate() + "</span>";
}
document.getElementById("days").innerHTML = days;

// chart
var rows = document.querySelectorAll("#tasks tr");
var first = rows[0].offsetTop;
var out = "";

function rowTop(n) {
    return rows[n].offsetTop - first;
}

function head(x, y, dark) {
    out += '<path class="head' + dark + '" d="M' + (x - 4) + ' ' + (y - 5) + 'h8l-4 5z"/>';
}

function down(from, x, n, to, dark) {
    var y = rowTop(n) + 15;
    out += '<path class="wire' + dark + '" d="M' + from + ' ' + (y - .5) + 'H' + (x - 1.5) + 'q2 0 2 3V' + (rowTop(to) + 4) + '"/>';
    head(x + .5, rowTop(to) + 9, dark);
}

function loop(x, n, to, end) {
    var y = rowTop(to) + 15;
    out += '<path class="wire" d="M' + x + ' ' + (rowTop(n) + 14.5) + 'q-4 0 -4 3V' + (y - 3) + 'q0 2.500 3 2.500H' + end + '"/>' +
        '<path class="head" d="M' + (end - 5) + ' ' + (y - 5) + 'v9l5-4.500z"/>';
}

out += '<path class="weekend" d="M890 0h7v790h-7zM900 0h17v790h-17z"/>';
out += '<path class="limit" d="M64.500 3V790M1130.500 3V790"/>';
out += '<path class="rule" d="M0 27.500H1300"/>';

// summary brackets: row, start, end
[[0, 64, 1130], [1, 64, 366], [2, 64, 366], [11, 64, 167], [18, 366, 1019], [19, 366, 825], [20, 366, 718]].forEach(function (b) {
    out += '<path class="bracket' + (b[0] ? "" : " top") + '" d="M' + b[1] + ' ' + (rowTop(b[0]) + 20) + 'v-10H' + b[2] + 'v10"/>';
});

// links
down(83, 102, 3, 4, "");
down(213, 216, 4, 5, "");
down(227, 230, 5, 6, "");
down(283, 286, 6, 7, "");
down(291, 295, 7, 8, "");
down(338, 342, 8, 9, "");
down(366, 369, 9, 10, "");
down(83, 92, 12, 13, "");
down(102, 105, 13, 14, "");
down(166, 170, 15, 16, "");
down(403, 406, 21, 23, "");
down(403, 406, 22, 23, "");
down(459, 462, 23, 24, "");
down(523, 526, 24, 25, "");
down(533, 536, 25, 26, "");
loop(102, 14, 15, 138);
loop(366, 21, 22, 393);
down(166, 357, 16, 17, " dark");

// bars: row, start, end, label
[
    [3, 64, 83, "Sarah Charlton[50%]"],
    [4, 102, 213, "Jennifer Blackbeard"],
    [5, 213, 227, "Jennifer Blackbeard[50%],Sarah Charlton[50%]"],
    [6, 227, 283, "Jennifer Blackbeard[50%]"],
    [7, 283, 292, "Jennifer Blackbeard[50%],Sarah Charlton[50%]"],
    [8, 292, 339, "Ray Axmacher,Sarah Charlton[50%],Jennifer Blackbeard[50%]"],
    [9, 339, 366, "Mickey Cobb[50%]"],
    [12, 64, 83, "Mickey Cobb[50%]"],
    [13, 92, 102, "Sarah Charlton[25%]"],
    [14, 102, 167, "Golden Rule Movers[200%]"],
    [15, 139, 167, "Golden Rule Movers[200%]"],
    [21, 366, 403, "Amanda Henriksen,Jessica Gutierrez,Tiah Adcox"],
    [22, 394, 403, "Mickey Cobb"],
    [23, 403, 459, "Jessica Gutierrez,Tiah Adcox"],
    [24, 459, 523, "Amanda Henriksen,Jessica Gutierrez,Tiah Adcox"],
    [25, 524, 533, "Amanda Henriksen[50%],Kris Rohweder[50%],Sarah Charlton[50%]"],
    [26, 533, 551, "Amanda Henriksen,Jessica Gutierrez"]
].forEach(function (b) {
    var y = rowTop(b[0]);
    out += '<rect class="bar" x="' + b[1] + '" y="' + (y + 9) + '" width="' + (b[2] - b[1]) + '" height="11"/>' +
        '<text class="label" x="' + (b[2] + 7) + '" y="' + (y + 15) + '">' + b[3] + '</text>';
});

// long link from Design Complete down to Strip walls
out += '<path class="wire dark" d="M369.500 ' + (rowTop(10) + 14) + 'V' + (rowTop(21) + 4) + '"/>';
head(369.5, rowTop(17) + 9, " dark");
head(369.5, rowTop(21) + 9, " dark");

// milestones: row, centre, date
[[10, 365, "7/5"], [16, 166, "6/13"], [17, 365, "7/5"]].forEach(function (m) {
    var y = rowTop(m[0]);
    out += '<path class="milestone" d="M' + m[1] + ' ' + (y + 9) + 'l5 5.500-5 5.500-5-5.500z"/>' +
        '<text class="label" x="' + (m[1] + 13) + '" y="' + (y + 15) + '">' + m[2] + '</text>';
});

document.getElementById("chart").innerHTML = out;
```
